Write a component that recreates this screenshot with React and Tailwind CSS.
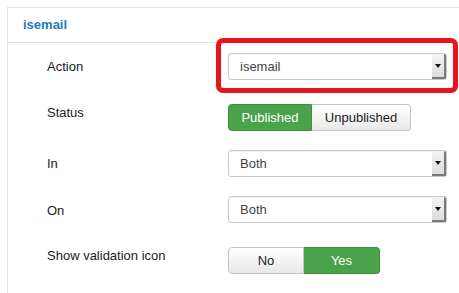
import React from 'react';

const font = { fontFamily: '"Liberation Sans", Arial, sans-serif' };

const SelectBox = ({ value }) => (
  <div className="flex h-[27px] w-[219px] items-center rounded-[3px] border border-[#c8c8c8] bg-white shadow-[inset_0_1px_1px_rgba(0,0,0,0.06)]">
    <span className="flex-1 pl-[11px] text-[13px] text-[#444]">{value}</span>
    <div className="flex h-full w-[14px] items-center justify-center rounded-tr-[2px] border-r-2 border-b-2 border-[#7a7a7a] bg-gradient-to-b from-[#f4f4f4] to-[#dcdcdc]">
      <svg width="6" height="4" viewBox="0 0 6 4">
        <path d="M0 0h6L3 4z" fill="#111" />
      </svg>
    </div>
  </div>
);

const Toggle = ({ options, active, widths }) => (
  <div className="flex h-[27px] text-[13px]">
    {options.map((opt, i) => {
      const on = i === active;
      const first = i === 0;
      const last = i === options.length - 1;
      return (
        <div
          key={opt}
          style={{ width: widths[i] }}
          className={
            'flex items-center justify-center border ' +
            (first ? 'rounded-l-[4px] ' : 'border-l-0 ') +
            (last ? 'rounded-r-[4px] ' : '') +
            (on
              ? 'border-[#3f8f3f] bg-[#4aa24a] text-white'
              : 'border-[#c4c4c4] bg-gradient-to-b from-white to-[#e8e8e8] text-[#222]')
          }
        >
          {opt}
        </div>
      );
    })}
  </div>
);

const Row = ({ label, children, mt, pt }) => (
  <div className="flex items-start" style={{ marginTop: mt }}>
    <div className="w-[220px] shrink-0 pl-[39px] text-[13px] leading-[18px] text-[#222]" style={{ paddingTop: pt }}>
      {label}
    </div>
    {children}
  </div>
);

export default function App() {
  return (
    <div className="relative h-[293px] w-[459px] overflow-hidden bg-white" style={font}>
      <div className="ml-[7px] mt-[7px] h-[320px] w-[480px] border-l border-t border-[#e3e3e3]">
        <div className="flex h-[35px] items-center border-b border-[#e3e3e3] pl-[15px] text-[13px] font-bold text-[#1c7cc0]">
          isemail
        </div>
        <Row label="Action" mt={10} pt={5}>
          <SelectBox value="isemail" />
        </Row>
        <Row label="Status" mt={24} pt={0}>
          <Toggle options={['Published', 'Unpublished']} active={0} widths={[84, 99]} />
        </Row>
        <Row label="In" mt={19} pt={5}>
          <SelectBox value="Both" />
        </Row>
        <Row label="On" mt={19} pt={6}>
          <SelectBox value="Both" />
        </Row>
        <Row label="Show validation icon" mt={24} pt={0}>
          <Toggle options={['No', 'Yes']} active={1} widths={[76, 76]} />
        </Row>
      </div>
      {/* annotation highlight */}
      <div className="pointer-events-none absolute left-[216px] top-[38px] h-[55px] w-[242px] rounded-[7px] border-[5px] border-[#e8131b]" />
    </div>
  );
}
